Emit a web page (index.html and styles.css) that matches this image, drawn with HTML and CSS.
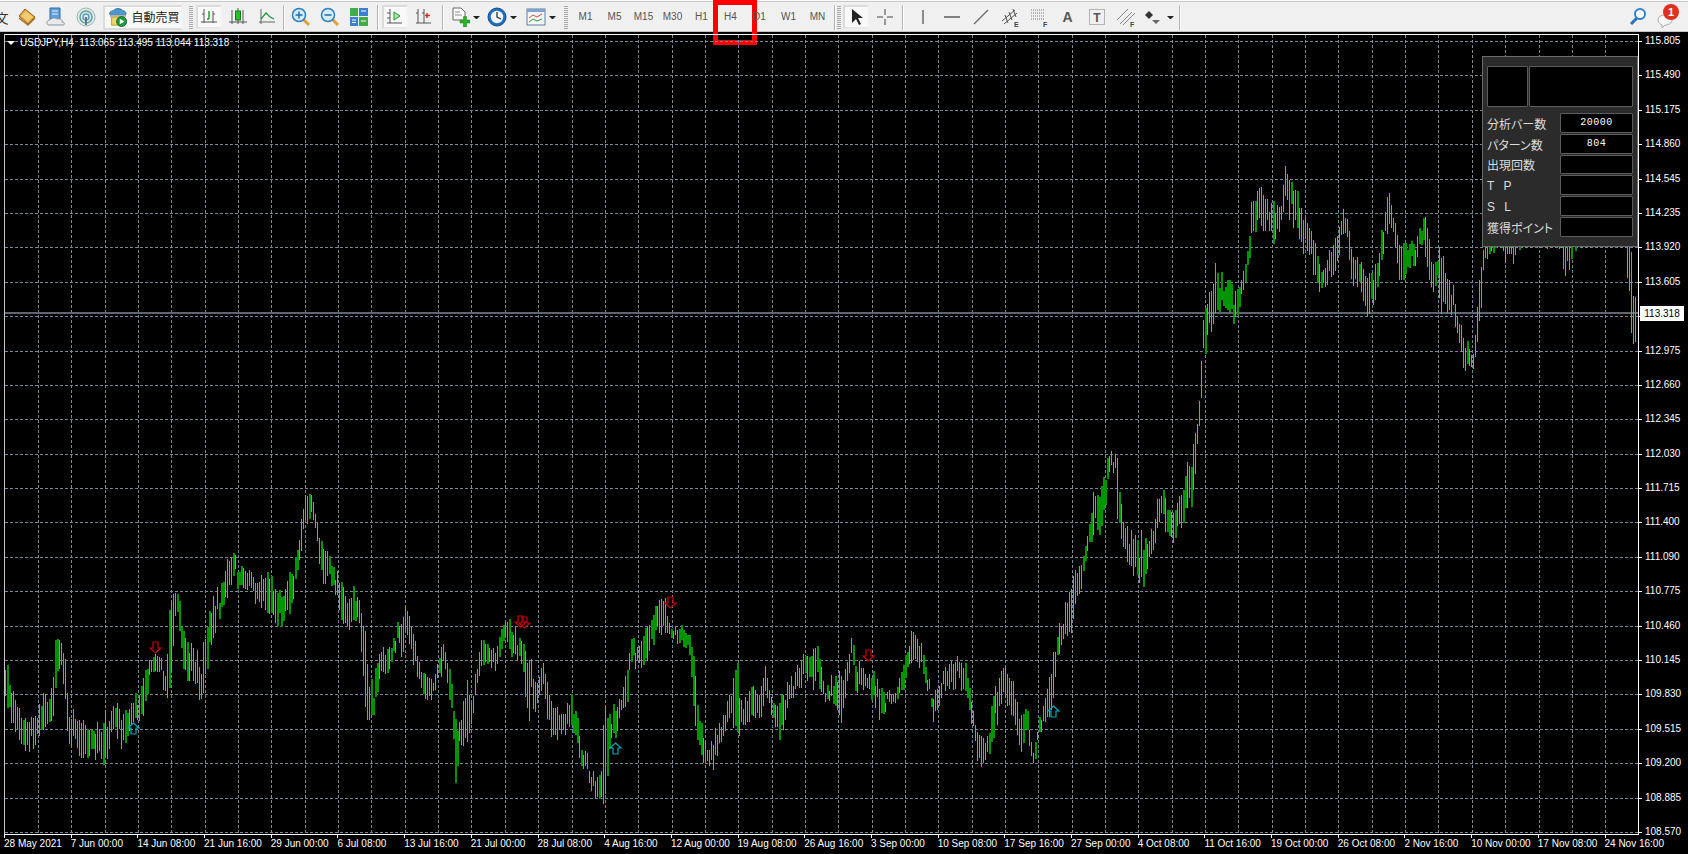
FILE: index.html
```html
<!DOCTYPE html>
<html lang="ja">
<head>
<meta charset="utf-8">
<title>USDJPY,H4</title>
<link rel="stylesheet" href="styles.css">
</head>
<body>
<header class="toolbar">
  <span class="tool first-glyph">文</span>
  <span class="tool wide"><svg viewBox="0 0 20 20"><path d="M2 9 8 2l10 8-7 7z" fill="#e0a63c" stroke="#8f6420"/><path d="M4 9l5-5 7 6-5 5z" fill="#f2cb74"/><path d="M2 11l9 7 7-7" fill="none" stroke="#a8742a" stroke-width="1.5"/></svg></span>
  <span class="tool wide"><svg viewBox="0 0 20 20"><path d="M4 1h10v11H4z" fill="#5e9fdc" stroke="#2f6aa8"/><path d="M6 4h6M6 7h6" stroke="#e3f0fb"/><path d="M3 18c-3 0-3-5 1-5 1-2 5-3 7-1 3-1 6 1 5 3 3 0 3 3 1 3z" fill="#e8eaee" stroke="#8d9299"/></svg></span>
  <span class="tool wide"><svg viewBox="0 0 20 20"><circle cx="10" cy="10" r="9" fill="#dfe9ea" stroke="#9db3ba"/><circle cx="10" cy="10" r="6" fill="none" stroke="#5fa89c" stroke-width="1.5"/><circle cx="10" cy="10" r="3" fill="none" stroke="#6a96c8" stroke-width="1.5"/><path d="M10 10v8" stroke="#5a7f80" stroke-width="2"/></svg></span>
  <span class="tool auto">
    <svg viewBox="0 0 22 22"><path d="M3 9c-3-2 0-5 3-5 2-3 8-3 10 0 3 0 5 3 3 5z" fill="#4a9ad0" stroke="#2a6a9a"/><path d="M3 9h16v2H3z" fill="#f3f3f3" stroke="#999"/><path d="M4 11h11v9H4z" fill="#f0d868" stroke="#b09a30"/><circle cx="15" cy="16" r="5.500" fill="#1d9a3c" stroke="#0e6a28"/><path d="M13 13l5 3-5 3z" fill="#fff"/></svg>
    <span class="auto-text">自動売買</span>
  </span>
  <span class="grip"></span>
  <span class="tool pressed"><svg viewBox="0 0 20 20"><path d="M5 2v14M2 15h16M14 4v12" stroke="#555" fill="none"/><path d="M3 7h2M14 7h2" stroke="#555"/><path d="M10 4v8M8 12h2" stroke="#1a9a2a" stroke-width="1.400" fill="none"/></svg></span>
  <span class="tool"><svg viewBox="0 0 20 20"><path d="M4 3v14M15 3v14M1 15h18" stroke="#555" fill="none"/><path d="M10 1v16" stroke="#555"/><rect x="7.500" y="4" width="5" height="9" fill="#27c22a" stroke="#147a18"/></svg></span>
  <span class="tool"><svg viewBox="0 0 20 20"><path d="M2 15h16M4 2v15" stroke="#666" fill="none"/><path d="M4 12l5-6 4 4 4 2" stroke="#1a9a3a" fill="none" stroke-width="1.200"/></svg></span>
  <span class="sep"></span>
  <span class="tool"><svg viewBox="0 0 20 20"><path d="M12 12l6 6" stroke="#d9a33a" stroke-width="3"/><circle cx="8" cy="8" r="6.500" fill="#d5ecfa" stroke="#2a80c0" stroke-width="1.500"/><path d="M4.500 8h7M8 4.500v7" stroke="#1d6fb0" stroke-width="1.500"/></svg></span>
  <span class="tool"><svg viewBox="0 0 20 20"><path d="M12 12l6 6" stroke="#d9a33a" stroke-width="3"/><circle cx="8" cy="8" r="6.500" fill="#d5ecfa" stroke="#2a80c0" stroke-width="1.500"/><path d="M4.500 8h7" stroke="#1d6fb0" stroke-width="1.500"/></svg></span>
  <span class="tool"><svg viewBox="0 0 20 20"><rect x="1" y="1" width="8" height="8" fill="#3fae49"/><rect x="10" y="1" width="9" height="8" fill="#3b7fd1"/><rect x="1" y="10" width="8" height="9" fill="#3b7fd1"/><rect x="10" y="10" width="9" height="9" fill="#3fae49"/><path d="M12 4h5M3 13h4M3 15.500h4M12 14h5" stroke="#fff"/></svg></span>
  <span class="sep roomy"></span>
  <span class="tool pressed"><svg viewBox="0 0 20 20"><path d="M5 2v14M2 16h15" stroke="#555" fill="none"/><path d="M2 6h3M2 11h3" stroke="#555"/><path d="M9 5l6 4-6 4z" fill="#a8e8a8" stroke="#1a9a2a"/></svg></span>
  <span class="tool"><svg viewBox="0 0 20 20"><path d="M4 2v14M10 2v14M2 16h15" stroke="#555" fill="none"/><path d="M2 6h2M8 6h2" stroke="#555"/><path d="M13 6v5M11 8.500h5" stroke="#d03020" stroke-width="1.500"/></svg></span>
  <span class="sep mid-gap"></span>
  <span class="tool"><svg viewBox="0 0 20 20"><path d="M3 1h8l4 4v8H3z" fill="#fff" stroke="#666"/><path d="M5 5h5M5 8h7" stroke="#888"/><path d="M10 13h3.500V9.500h3V13H20v3h-3.500v4h-3v-4H10z" fill="#27b32b" stroke="#137a1a" stroke-width=".5"/></svg></span>
  <span class="caret"></span>
  <span class="tool"><svg viewBox="0 0 20 20"><circle cx="10" cy="10" r="9" fill="#1f6fc0" stroke="#114f92"/><circle cx="10" cy="10" r="6.200" fill="#eef4fa"/><path d="M10 5v5l4 2" fill="none" stroke="#333" stroke-width="1.300"/></svg></span>
  <span class="caret spaced-caret"></span>
  <span class="tool"><svg viewBox="0 0 20 20"><rect x="1" y="2" width="18" height="16" fill="#f4f7fa" stroke="#5c7fa8"/><path d="M1 2h18v3H1z" fill="#7ca4cf"/><path d="M3 11l4-3 4 2 5-3" fill="none" stroke="#d04a3a"/><path d="M3 15l4-3 4 2 5-2" fill="none" stroke="#2f9a3a"/></svg></span>
  <span class="caret"></span>
  <span class="grip periods"></span>
  <span class="period">M1</span>
  <span class="period">M5</span>
  <span class="period">M15</span>
  <span class="period">M30</span>
  <span class="period">H1</span>
  <span class="period current">H4</span>
  <span class="period">D1</span>
  <span class="period">W1</span>
  <span class="period">MN</span>
  <span class="sep"></span>
  <span class="grip cursors"></span>
  <span class="tool pressed"><svg viewBox="0 0 20 20"><path d="M6 2v14l4-4 3 6 2-1-3-6h5z" fill="#222"/></svg></span>
  <span class="tool"><svg viewBox="0 0 20 20"><path d="M10 2v6M10 12v6M2 10h6M12 10h6" stroke="#444"/></svg></span>
  <span class="sep before-lines"></span>
  <span class="tool line"><svg viewBox="0 0 20 20"><path d="M10 3v14" stroke="#555" stroke-width="1.300"/></svg></span>
  <span class="tool line"><svg viewBox="0 0 20 20"><path d="M2 10h16" stroke="#444" stroke-width="1.300"/></svg></span>
  <span class="tool line"><svg viewBox="0 0 20 20"><path d="M3 17 17 3" stroke="#666" stroke-width="1.300"/></svg></span>
  <span class="tool line"><svg viewBox="0 0 20 20"><path d="M2 14 15 3M4 17 17 6M5 8l3 8M9 5l3 8M13 2l3 8" stroke="#555"/><text x="14" y="20" class="mini">E</text></svg></span>
  <span class="tool line"><svg viewBox="0 0 20 20"><path d="M2 3h14M2 6h14M2 9h14M2 12h14" stroke="#777" stroke-dasharray="1 1"/><text x="14" y="20" class="mini">F</text></svg></span>
  <span class="tool line letter">A</span>
  <span class="tool line"><svg viewBox="0 0 20 20"><rect x="2.500" y="2.500" width="15" height="15" fill="none" stroke="#777" stroke-dasharray="1 1"/><text x="10" y="15" class="mid">T</text></svg></span>
  <span class="tool line"><svg viewBox="0 0 20 20"><path d="M1 13 12 2M4 17 16 5M7 18 19 6" stroke="#888"/><text x="14" y="20" class="mini">F</text></svg></span>
  <span class="tool line narrow"><svg viewBox="0 0 20 20"><path d="M2 8l4-4 4 4-4 4z" fill="#333"/><path d="M9 13h8l-4 4z" fill="#666"/></svg></span>
  <span class="caret last-caret"></span>
  <span class="sep"></span>
  <span class="spring"></span>
  <span class="tool"><svg viewBox="0 0 20 20"><path d="M9 11l-6 6" stroke="#2a6fc0" stroke-width="3"/><circle cx="12" cy="7" r="5" fill="#fff" stroke="#2a7fd0" stroke-width="2"/></svg></span>
  <span class="notice">
    <svg viewBox="0 0 24 24"><path d="M3 14c0-3 3-5 7-5s7 2 7 5-3 5-7 5l-3 3v-3c-2-1-4-3-4-5z" fill="#f8f8f8" stroke="#a8a8a8"/></svg>
    <span class="badge">1</span>
  </span>
</header>

<main class="chart">
  <section class="plot">
    <svg id="canvas" class="canvas" viewBox="5 35 1633 799" aria-label="USDJPY H4 chart"></svg>
    <div class="legend"><span class="legend-mark"></span>USDJPY,H4&nbsp; 113.065 113.495 113.044 113.318</div>
    <aside class="panel">
      <div class="panel-top"><div class="well"></div><div class="well"></div></div>
      <div class="panel-row"><span class="panel-label">分析バー数</span><span class="well value">20000</span></div>
      <div class="panel-row"><span class="panel-label">パターン数</span><span class="well value">804</span></div>
      <div class="panel-row"><span class="panel-label">出現回数</span><span class="well value"></span></div>
      <div class="panel-row"><span class="panel-label spaced">T P</span><span class="well value"></span></div>
      <div class="panel-row"><span class="panel-label spaced">S L</span><span class="well value"></span></div>
      <div class="panel-row"><span class="panel-label">獲得ポイント</span><span class="well value"></span></div>
    </aside>
  </section>
  <aside class="price-axis">
    <span>115.805</span><span>115.490</span><span>115.175</span><span>114.860</span><span>114.545</span><span>114.235</span><span>113.920</span><span>113.605</span><span></span><span>112.975</span><span>112.660</span><span>112.345</span><span>112.030</span><span>111.715</span><span>111.400</span><span>111.090</span><span>110.775</span><span>110.460</span><span>110.145</span><span>109.830</span><span>109.515</span><span>109.200</span><span>108.885</span><span>108.570</span>
    <b class="price-now">113.318</b>
  </aside>
  <footer class="time-axis">
    <span>28 May 2021</span><span>7 Jun 00:00</span><span>14 Jun 08:00</span><span>21 Jun 16:00</span><span>29 Jun 00:00</span><span>6 Jul 08:00</span><span>13 Jul 16:00</span><span>21 Jul 00:00</span><span>28 Jul 08:00</span><span>4 Aug 16:00</span><span>12 Aug 00:00</span><span>19 Aug 08:00</span><span>26 Aug 16:00</span><span>3 Sep 00:00</span><span>10 Sep 08:00</span><span>17 Sep 16:00</span><span>27 Sep 00:00</span><span>4 Oct 08:00</span><span>11 Oct 16:00</span><span>19 Oct 00:00</span><span>26 Oct 08:00</span><span>2 Nov 16:00</span><span>10 Nov 00:00</span><span>17 Nov 08:00</span><span>24 Nov 16:00</span>
  </footer>
</main>
<script src="chart.js"></script>
</body>
</html>
```
FILE: styles.css
```css
* { box-sizing: border-box; }
html, body { margin: 0; height: 100%; }
body {
  width: 1688px;
  height: 854px;
  overflow: hidden;
  background: #f0f0f0;
  font: 10px/12px "Liberation Sans", Arial, sans-serif;
}

/* toolbar */
.toolbar {
  display: flex;
  align-items: center;
  height: 32px;
  padding-top: 1px;
  background: #f0f0f0;
  border-top: 1px solid #fbfbfb;
  box-shadow: inset 0 1px 0 #c8c8c8, inset 0 -1px 0 #c4c4c4;
  color: #444;
}
.tool {
  position: relative;
  flex: none;
  display: flex;
  align-items: center;
  justify-content: center;
  width: 26px;
  height: 24px;
  margin: 0 1.5px;
}
.tool svg { width: 20px; height: 20px; }
.tool.wide { width: 29.5px; margin: 0; }
.tool.line { width: 29px; margin: 0; }
.tool.narrow { width: 25px; }
.tool.pressed {
  background: #f9f9f9;
  border: 2px solid #dcdcdc;
  border-right-color: #f4f4f4;
  border-bottom-color: #e8e8e8;
}
.first-glyph {
  width: 16px;
  margin: 0 2px 0 -6px;
  font: 13px "Noto Sans CJK JP", sans-serif;
  color: #333;
}
.tool.auto {
  justify-content: flex-start;
  gap: 4px;
  width: 80px;
  height: 25px;
  margin: 0 0 0 2px;
  padding-left: 3px;
  background: #f8f8f8;
  border: 2px solid #dcdcdc;
  border-right-color: #f4f4f4;
}
.auto-text { font: 12px/14px "Noto Sans CJK JP", sans-serif; color: #222; white-space: nowrap; }
.grip {
  flex: none;
  width: 4px;
  height: 23px;
  margin: 0 1.5px 0 6px;
  background: repeating-linear-gradient(to bottom, #a9a9a9 0 1px, transparent 1px 2px);
}
.grip.periods { margin: 0 3px 0 5.5px; }
.grip.cursors { margin: 0 0 0 0; }
.sep {
  flex: none;
  width: 1px;
  height: 25px;
  margin: 0 2px;
  background: #b4b4b4;
  box-shadow: 1px 0 0 #fff;
}
.sep.roomy { margin: 0 2.5px 0 4px; }
.sep.mid-gap { margin: 0 3px; }
.sep.before-lines { margin: 0 5px 0 3px; }
.caret {
  flex: none;
  box-sizing: content-box;
  width: 1px;
  height: 0;
  margin: 0 3px 0 -2px;
  border: 3px solid transparent;
  border-top: 3px solid #222;
  border-bottom: 0;
}
.caret.spaced-caret { margin-right: 5px; }
.caret.last-caret { margin: 0 3px 0 2px; }
.period {
  position: relative;
  flex: none;
  width: 29px;
  text-align: center;
  color: #555;
}
.period.current::after {
  content: "";
  position: absolute;
  left: -3px;
  right: -12px;
  top: -11px;
  height: 35px;
  border: 5px solid #ff0000;
}
.letter { font: bold 14px "Liberation Sans", sans-serif; color: #555; }
.mini { font: bold 7px "Liberation Sans", sans-serif; fill: #444; }
.mid { font: bold 12px "Liberation Sans", sans-serif; fill: #555; text-anchor: middle; }
.spring { flex: 1; }
.notice {
  position: relative;
  flex: none;
  width: 28px;
  height: 26px;
  margin: 0 5px 0 2.5px;
}
.notice svg { position: absolute; left: 0; top: 2px; width: 24px; height: 24px; }
.badge {
  position: absolute;
  left: 8px;
  top: 0;
  width: 16px;
  height: 16px;
  border-radius: 50%;
  background: #e0301e;
  color: #fff;
  font: bold 11px/16px "Liberation Sans", sans-serif;
  text-align: center;
}

/* chart window */
.chart {
  display: grid;
  grid-template-columns: 1635px 1fr;
  grid-template-rows: 801px 1fr;
  height: 822px;
  padding: 2px 0 0 4px;
  background: #000;
  color: #fff;
}
.plot {
  position: relative;
  grid-column: 1;
  grid-row: 1;
  border: 1px solid #fff;
  border-left-color: #c8c8c8;
}
.canvas { display: block; width: 1633px; height: 799px; }
.legend {
  position: absolute;
  left: 2px;
  top: 1px;
  display: flex;
  align-items: center;
  height: 14px;
  white-space: pre;
}
.legend-mark {
  width: 0;
  height: 0;
  margin-right: 5px;
  border: 4px solid transparent;
  border-top: 4px solid #fff;
  border-bottom: 0;
}

/* info panel */
.panel {
  position: absolute;
  right: 0;
  top: 21px;
  display: flex;
  flex-direction: column;
  gap: 1px;
  width: 156px;
  height: 191px;
  padding: 9px 4px 0 4px;
  background: #2b2b2b;
  border: 1px solid #6a6a6a;
  color: #dcdcdc;
}
.panel-top {
  display: grid;
  grid-template-columns: 41px 1fr;
  gap: 1px;
  height: 41px;
  margin-bottom: 5px;
}
.well { background: #000; border: 1px solid #5c5c5c; border-radius: 1px; }
.panel-row { display: flex; justify-content: space-between; align-items: center; height: 19.8px; }
.panel-label {
  padding-top: 2px;
  font: 12px/16px "Noto Sans CJK JP", sans-serif;
  font-feature-settings: "palt";
  white-space: nowrap;
}
.panel-label.spaced { font-family: "Liberation Sans", sans-serif; letter-spacing: 3px; }
.value {
  width: 73px;
  height: 19.8px;
  font: 10px/18px "Liberation Mono", monospace;
  letter-spacing: .5px;
  color: #fff;
  text-align: center;
}

/* axes */
.price-axis {
  position: relative;
  grid-column: 2;
  grid-row: 1 / 3;
  display: flex;
  flex-direction: column;
  justify-content: space-between;
  padding: 1px 0 16px;
}
.price-axis span {
  position: relative;
  display: block;
  height: 12px;
  padding-left: 6px;
}
.price-axis span::before {
  content: "";
  position: absolute;
  left: 0;
  top: 6px;
  width: 3px;
  height: 1px;
  background: #fff;
}
.price-now {
  position: absolute;
  left: 1px;
  top: 272px;
  width: 44px;
  height: 15px;
  background: #fff;
  color: #000;
  font-weight: normal;
  line-height: 15px;
  text-align: center;
}
.time-axis {
  grid-column: 1;
  grid-row: 2;
  display: flex;
}
.time-axis span {
  position: relative;
  flex: 0 0 66.69px;
  padding-top: 3px;
  white-space: nowrap;
}
.time-axis span::before {
  content: "";
  position: absolute;
  left: 0;
  top: 0;
  width: 1px;
  height: 3px;
  background: #fff;
}
```
FILE: chart.js
```js
(function () {
  var NS = "http://www.w3.org/2000/svg";
  var svg = document.getElementById("canvas");

  // envelope of the price bars: [x, highest y, lowest y] in page pixels
  var env = [
    [5,653,703],[10,682,716],[17,706,740],[22,712,748],[27,715,750],[33,715,745],[38,710,740],[42,688,725],[50,700,730],
    [55,640,716],[60,640,660],[65,657,703],[68,700,745],[75,715,755],[82,725,763],[90,725,755],[100,728,760],[105,713,762],
    [115,700,735],[122,715,752],[130,695,730],[138,697,720],[143,675,715],[150,657,675],[160,660,675],[165,675,697],
    [170,585,690],[175,590,615],[178,590,612],[180,620,660],[188,640,680],[195,650,690],[199,655,706],[205,630,680],
    [212,600,650],[217,590,620],[222,585,610],[228,555,604],[234,553,575],[238,570,592],[247,568,592],[256,579,600],
    [265,569,610],[277,593,625],[285,590,620],[292,555,610],[296,560,575],[300,521,556],[303,498,528],[313,494,522],
    [317,525,550],[320,540,573],[327,550,590],[333,567,585],[340,575,620],[347,605,632],[353,586,620],[360,605,635],
    [363,615,700],[368,670,726],[373,680,710],[378,650,685],[388,650,675],[395,630,650],[402,615,655],[408,600,640],
    [417,655,680],[422,675,695],[427,665,705],[433,680,695],[442,640,670],[450,670,700],[455,715,778],[460,720,750],
    [467,680,745],[473,690,710],[480,640,670],[490,640,665],[497,650,670],[503,612,640],[513,630,660],[522,635,665],
    [528,650,720],[537,685,705],[543,650,690],[548,695,730],[555,700,740],[563,718,735],[570,695,725],[577,700,745],
    [580,740,765],[588,760,775],[593,770,798],[600,775,800],[604,710,815],[610,710,735],[616,700,740],[620,700,715],
    [627,665,700],[630,637,660],[640,645,670],[648,620,655],[657,605,630],[663,588,635],[670,625,640],[680,625,640],
    [688,630,650],[693,650,710],[697,700,740],[703,730,760],[708,750,765],[713,735,770],[722,715,740],[730,690,715],
    [737,650,740],[740,700,730],[750,690,720],[760,690,720],[765,660,695],[770,700,715],[780,700,740],[790,680,700],
    [797,665,690],[803,652,680],[817,646,690],[825,690,707],[830,680,700],[842,670,720],[847,660,680],[852,630,660],
    [855,660,690],[867,670,690],[873,665,700],[880,690,720],[887,695,705],[900,680,700],[907,640,670],[913,626,660],
    [923,650,675],[928,680,690],[933,695,717],[940,680,700],[950,659,685],[965,657,690],[972,702,725],[978,735,772],
    [987,740,760],[992,693,750],[1003,665,695],[1013,680,715],[1020,715,750],[1027,708,745],[1033,755,773],[1040,715,730],
    [1047,688,725],[1053,650,702],[1058,630,660],[1063,610,640],[1070,590,635],[1075,570,616],[1080,563,590],[1087,540,565],
    [1092,497,540],[1100,492,530],[1105,463,510],[1108,453,470],[1115,450,473],[1117,460,520],[1122,512,540],[1128,533,570],
    [1137,533,575],[1143,535,585],[1150,537,558],[1155,505,540],[1162,480,510],[1165,500,535],[1173,510,540],[1182,485,525],
    [1188,457,510],[1192,435,510],[1197,420,445],[1200,380,420],[1203,320,370],[1207,300,340],[1215,262,322],[1223,280,305],
    [1228,260,320],[1233,290,325],[1238,285,315],[1243,270,290],[1248,245,265],[1252,188,240],[1260,190,230],[1267,200,235],
    [1275,205,250],[1282,195,220],[1285,162,200],[1290,180,220],[1297,195,230],[1302,215,250],[1310,225,260],[1317,255,300],
    [1323,265,290],[1330,250,285],[1338,230,260],[1343,205,230],[1348,225,250],[1352,250,290],[1357,255,285],[1362,265,295],
    [1367,270,320],[1373,270,305],[1380,240,275],[1388,190,225],[1395,220,245],[1400,245,290],[1408,240,270],[1415,245,270],
    [1422,215,240],[1426,208,260],[1430,255,295],[1437,260,285],[1440,236,315],[1447,275,315],[1453,285,315],[1458,315,340],
    [1465,340,372],[1472,355,370],[1475,322,365],[1478,295,335],[1481,240,310],[1483,240,270],[1490,220,262],[1497,210,240],
    [1507,225,265],[1515,225,262],[1525,215,240],[1540,220,245],[1548,225,252],[1556,215,240],[1566,230,285],[1572,225,250],
    [1590,210,240],[1610,200,235],[1625,210,240],[1627,215,278],[1630,220,343],[1633,294,343],[1635,294,343]
  ];

  var seed = 4711;
  function rnd() {
    seed = (seed * 16807) % 2147483647;
    return seed / 2147483647;
  }

  function add(tag, attrs) {
    var el = document.createElementNS(NS, tag);
    for (var k in attrs) el.setAttribute(k, attrs[k]);
    svg.appendChild(el);
    return el;
  }

  // grid
  var grid = "";
  for (var i = 0; i < 24; i++) {
    var gy = Math.round(41 + i * 34.39) + 0.5;
    grid += "M5 " + gy + "H1638";
  }
  for (var gx = 38; gx < 1637; gx += 33.345) {
    var vx = Math.round(gx) + 0.5;
    grid += "M" + vx + " 35V834";
  }
  add("path", { d: grid, stroke: "#778899", "stroke-dasharray": "3 2", fill: "none" });
  add("rect", { x: 5, y: 312, width: 1633, height: 2, fill: "#5d6672" });

  // bars
  var up = "", down = "", falling = false, e = 0;
  for (var x = 5; x <= 1635; x += 2) {
    while (e < env.length - 2 && env[e + 1][0] < x) e++;
    var a = env[e], b = env[e + 1];
    var t = Math.max(0, Math.min(1, (x - a[0]) / (b[0] - a[0])));
    var hi = a[1] + (b[1] - a[1]) * t;
    var lo = a[2] + (b[2] - a[2]) * t;
    var span = lo - hi;
    var len = span * (0.5 + 0.55 * rnd());
    var jitter = (rnd() - 0.5) * 10;
    var top = Math.round(hi + (span - len) * rnd() + jitter);
    var bot = Math.round(top + len);
    falling = falling ? rnd() > 0.5 : rnd() < 0.2;
    if (falling) down += "M" + x + " " + top + "h2V" + bot + "h-2z";
    else up += "M" + x + " " + top + "h1V" + bot + "h-1z";
  }
  add("path", { d: down, fill: "#009400", "shape-rendering": "crispEdges" });
  add("path", { d: up, fill: "#00f800", "shape-rendering": "crispEdges" });

  // signal arrows
  function arrow(x, y, dir, colour) {
    var p = dir > 0
      ? "M0 0H5V6H8L2.500 11 -3 6H0Z"
      : "M2.500 0 8 5H5V11H0V5H-3Z";
    add("path", {
      d: p,
      transform: "translate(" + (x - 2) + " " + y + ")",
      fill: "none",
      stroke: colour,
      "stroke-width": 1.2
    });
  }
  [[155, 642], [520, 616], [524, 617], [670, 597], [868, 650]].forEach(function (s) { arrow(s[0], s[1], 1, "#c80000"); });
  [[133, 723], [615, 743], [1053, 706]].forEach(function (s) { arrow(s[0], s[1], -1, "#00a8b8"); });
})();
```
